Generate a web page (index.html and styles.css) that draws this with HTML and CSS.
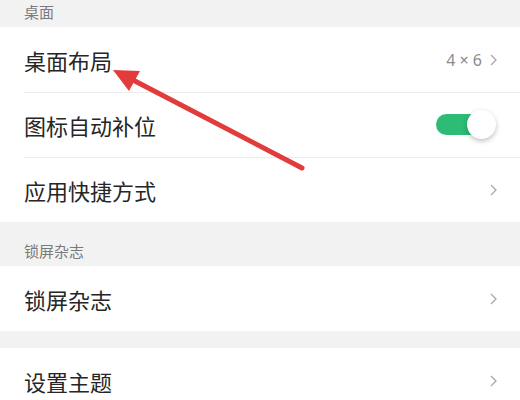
FILE: index.html
```html
<!DOCTYPE html>
<html lang="zh-CN">
<head>
    <meta charset="UTF-8">
    <meta name="viewport" content="width=device-width, initial-scale=1.0">
    <title>桌面设置</title>
    <link rel="stylesheet" href="styles.css">
</head>
<body>
    <div class="settings">
        <div class="section-head section-head--top">桌面</div>
        <div class="group">
            <div class="row">
                <span class="row-title">桌面布局</span>
                <span class="row-extra">
                    <span class="row-value">4 × 6</span>
                    <svg class="chevron" viewBox="0 0 7 12"><polyline points="1,1 6,6 1,11"></polyline></svg>
                </span>
            </div>
            <div class="row">
                <span class="row-title">图标自动补位</span>
                <span class="switch on"><span class="knob"></span></span>
            </div>
            <div class="row">
                <span class="row-title">应用快捷方式</span>
                <svg class="chevron" viewBox="0 0 7 12"><polyline points="1,1 6,6 1,11"></polyline></svg>
            </div>
        </div>

        <div class="section-head">锁屏杂志</div>
        <div class="group">
            <div class="row">
                <span class="row-title">锁屏杂志</span>
                <svg class="chevron" viewBox="0 0 7 12"><polyline points="1,1 6,6 1,11"></polyline></svg>
            </div>
        </div>

        <div class="spacer"></div>
        <div class="group">
            <div class="row">
                <span class="row-title">设置主题</span>
                <svg class="chevron" viewBox="0 0 7 12"><polyline points="1,1 6,6 1,11"></polyline></svg>
            </div>
        </div>

        <!-- annotation arrow drawn on top of the screenshot -->
        <svg class="annotation" viewBox="0 0 520 400">
            <line x1="302" y1="168" x2="133" y2="80"></line>
            <polygon points="113,70 140,71 129,91"></polygon>
        </svg>
    </div>
</body>
</html>
```

FILE: styles.css
```css
* {
    margin: 0;
    padding: 0;
    box-sizing: border-box;
}

body {
    font-family: "Noto Sans CJK SC", "Noto Sans", sans-serif;
    background: #f2f2f2;
    width: 520px;
    height: 400px;
    overflow: hidden;
}

.settings {
    position: relative;
    width: 520px;
    height: 400px;
    overflow: hidden;
}

.section-head {
    height: 44px;
    padding: 0 24px 5px;
    display: flex;
    align-items: flex-end;
    font-size: 15px;
    color: #7a7a7a;
}

.section-head--top {
    height: 27px;
}

.spacer {
    height: 17px;
}

.group {
    background: #fff;
}

.row {
    height: 65px;
    padding: 0 23px 0 24px;
    display: flex;
    align-items: center;
    justify-content: space-between;
    position: relative;
}

.row + .row::before {
    content: "";
    position: absolute;
    left: 24px;
    right: 0;
    top: 0;
    height: 1px;
    background: #ececec;
}

.row-title {
    font-size: 22px;
    color: #262626;
}

.row-extra {
    display: flex;
    align-items: center;
    gap: 8px;
}

.row-value {
    font-family: "Noto Sans", "Open Sans", sans-serif;
    font-size: 16px;
    color: #8c8c8c;
}

.chevron {
    width: 7px;
    height: 12px;
    fill: none;
    stroke: #a8a8a8;
    stroke-width: 1.3;
}

.switch {
    width: 50px;
    height: 21px;
    border-radius: 11px;
    background: #2dbb76;
    display: flex;
    align-items: center;
    justify-content: flex-end;
    margin-right: 11px;
}

.knob {
    width: 29px;
    height: 29px;
    border-radius: 50%;
    background: #fff;
    margin-right: -10px;
    box-shadow: 0 2px 5px rgba(0, 0, 0, 0.25);
}

.annotation {
    position: absolute;
    left: 0;
    top: 0;
    width: 520px;
    height: 400px;
    pointer-events: none;
}

.annotation line {
    stroke: #e23b3b;
    stroke-width: 5;
    stroke-linecap: round;
}

.annotation polygon {
    fill: #e23b3b;
}
```
